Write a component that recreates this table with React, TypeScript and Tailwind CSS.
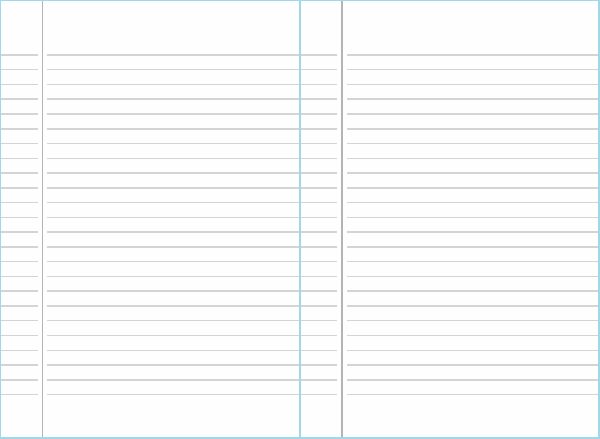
import React from "react";

const ROWS = Array.from({ length: 24 }, (_, i) => i);

function Lines() {
  return (
    <div className="flex flex-col gap-[13.28px] pt-[53.2px]">
      {ROWS.map((i) => (
        <div key={i} className="h-[1.5px] bg-[#d4d4d4]" />
      ))}
    </div>
  );
}

export default function App() {
  return (
    <div className="w-[600px] h-[439px] bg-[#fefefe] border-[1.5px] border-b-2 border-r-2 border-[#9fd8e9] flex overflow-hidden">
      <div className="w-[40.5px] shrink-0 pr-[4px]">
        <Lines />
      </div>
      <div className="w-[1.8px] shrink-0 bg-[#b4b4b4]" />
      <div className="w-[298px] shrink-0 px-[4px] relative">
        <Lines />
        <div className="absolute top-0 bottom-0 left-[256px] w-[1.8px] bg-[#9fd8e9]" />
      </div>
      <div className="w-[1.8px] shrink-0 bg-[#b4b4b4]" />
      <div className="flex-1 pl-[4px]">
        <Lines />
      </div>
    </div>
  );
}
